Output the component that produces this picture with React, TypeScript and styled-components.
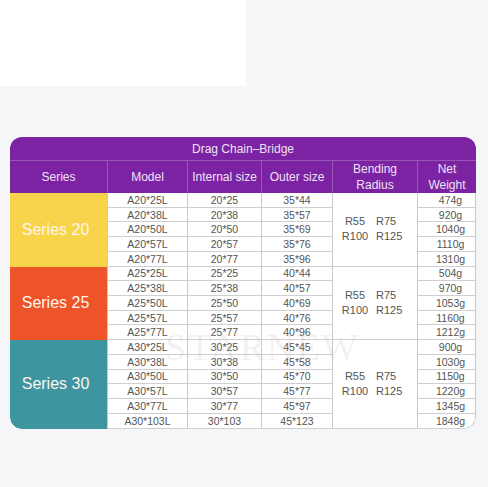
import styled, { createGlobalStyle } from "styled-components";

const GlobalStyle = createGlobalStyle`
  html, body {
    margin: 0;
    padding: 0;
    background: #f5f6f8;
  }
  body {
    font-family: "Liberation Sans", Arial, sans-serif;
  }
`;

type Group = {
  name: string;
  color: string;
  rows: [string, string, string, string][];
};

const groups: Group[] = [
  {
    name: "Series 20",
    color: "#f8d44a",
    rows: [
      ["A20*25L", "20*25", "35*44", "474g"],
      ["A20*38L", "20*38", "35*57", "920g"],
      ["A20*50L", "20*50", "35*69", "1040g"],
      ["A20*57L", "20*57", "35*76", "1110g"],
      ["A20*77L", "20*77", "35*96", "1310g"],
    ],
  },
  {
    name: "Series 25",
    color: "#ee5429",
    rows: [
      ["A25*25L", "25*25", "40*44", "504g"],
      ["A25*38L", "25*38", "40*57", "970g"],
      ["A25*50L", "25*50", "40*69", "1053g"],
      ["A25*57L", "25*57", "40*76", "1160g"],
      ["A25*77L", "25*77", "40*96", "1212g"],
    ],
  },
  {
    name: "Series 30",
    color: "#3e95a0",
    rows: [
      ["A30*25L", "30*25", "45*45", "900g"],
      ["A30*38L", "30*38", "45*58", "1030g"],
      ["A30*50L", "30*50", "45*70", "1150g"],
      ["A30*57L", "30*57", "45*77", "1220g"],
      ["A30*77L", "30*77", "45*97", "1345g"],
      ["A30*103L", "30*103", "45*123", "1848g"],
    ],
  },
];

export default function App() {
  return (
    <Page>
      <GlobalStyle />
      <Blank />
      <Table>
        <Title>Drag Chain–Bridge</Title>
        <Head>Series</Head>
        <Head>Model</Head>
        <Head>Internal size</Head>
        <Head>Outer size</Head>
        <Head>Bending<br />Radius</Head>
        <Head $last>Net<br />Weight</Head>
        {groups.map((g, gi) =>
          g.rows.map((r, ri) => {
            const lastRow = gi === groups.length - 1 && ri === g.rows.length - 1;
            return [
              ri === 0 && (
                <SeriesCell key={g.name} $color={g.color} $rows={g.rows.length}>
                  {g.name}
                </SeriesCell>
              ),
              <Cell key={r[0] + "m"}>{r[0]}</Cell>,
              <Cell key={r[0] + "i"}>{r[1]}</Cell>,
              <Cell key={r[0] + "o"}>{r[2]}</Cell>,
              ri === 0 && (
                <BendCell key={g.name + "b"} $rows={g.rows.length}>
                  <Radius>
                    <span>R55</span>
                    <span>R75</span>
                    <span>R100</span>
                    <span>R125</span>
                  </Radius>
                </BendCell>
              ),
              <WeightCell key={r[0] + "w"} $corner={lastRow}>
                {r[3]}
              </WeightCell>,
            ];
          })
        )}
        <Watermark>STARNEW</Watermark>
      </Table>
    </Page>
  );
}

const Page = styled.div`
  width: 488px;
  height: 487px;
  overflow: hidden;
  display: flex;
  flex-direction: column;
`;

const Blank = styled.div`
  width: 246px;
  height: 86px;
  background: #fff;
`;

const Table = styled.div`
  position: relative;
  margin: 51px 0 0 10px;
  width: 466px;
  display: grid;
  grid-template-columns: 98px 80px 74px 71px 85px 58px;
  grid-template-rows: 24px 32px repeat(16, 14.73px);
  border-radius: 12px;
  overflow: hidden;
  background: #fff;
`;

const Title = styled.div`
  grid-column: 1 / -1;
  background: #7b23a2;
  color: #efe2f7;
  font-size: 12px;
  display: flex;
  align-items: center;
  justify-content: center;
  border-bottom: 1px solid #9a55bb;
`;

const Head = styled.div<{ $last?: boolean }>`
  background: #7b23a2;
  color: #efe2f7;
  font-size: 12px;
  line-height: 16px;
  display: flex;
  align-items: center;
  justify-content: center;
  text-align: center;
  border-right: ${(p) => (p.$last ? "none" : "1px solid #9a55bb")};
`;

const SeriesCell = styled.div<{ $color: string; $rows: number }>`
  grid-row: span ${(p) => p.$rows};
  background: ${(p) => p.$color};
  color: #fdf6ee;
  font-size: 16px;
  display: flex;
  align-items: center;
  justify-content: center;
  padding-right: 6px;
  border-right: 1px solid #c9c9c9;
  border-bottom-left-radius: ${(p) => (p.$rows === 6 ? "12px" : "0")};
`;

const Cell = styled.div`
  color: #555;
  font-size: 10.5px;
  display: flex;
  align-items: center;
  justify-content: center;
  border-right: 1px solid #c9c9c9;
  border-bottom: 1px solid #cfcfcf;
`;

const BendCell = styled(Cell)<{ $rows: number }>`
  grid-row: span ${(p) => p.$rows};
  padding-right: 6px;
`;

const Radius = styled.div`
  display: grid;
  grid-template-columns: 30px 28px;
  column-gap: 6px;
  row-gap: 2px;
  font-size: 11px;
  line-height: 13px;

  span:nth-child(odd) {
    text-align: center;
  }
`;

const WeightCell = styled(Cell)<{ $corner?: boolean }>`
  padding-left: 8px;
  border-bottom-right-radius: ${(p) => (p.$corner ? "12px" : "0")};
`;

const Watermark = styled.div`
  position: absolute;
  left: 155px;
  top: 188px;
  font-family: "Liberation Serif", serif;
  font-size: 38px;
  letter-spacing: 2px;
  color: rgba(190, 160, 170, 0.16);
  pointer-events: none;
`;
